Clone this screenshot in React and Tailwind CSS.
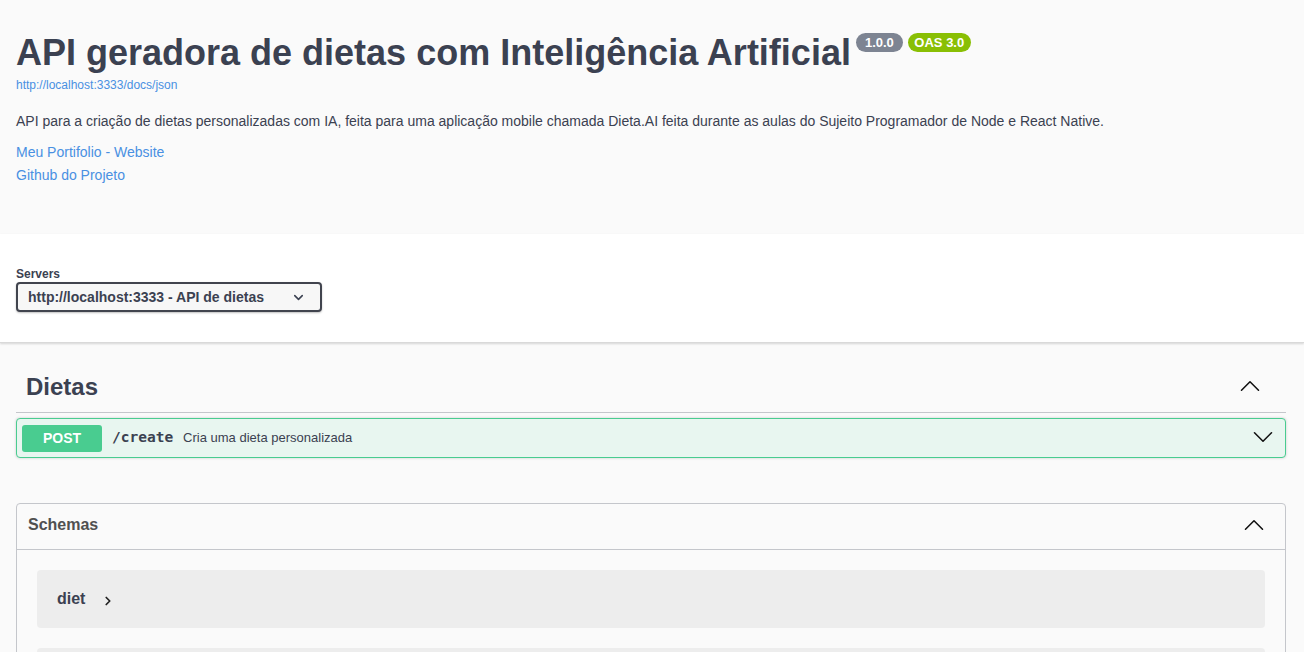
import { ChevronDown, ChevronUp, ChevronRight } from 'lucide-react';

const sans = { fontFamily: '"Liberation Sans", Arial, sans-serif' };

export default function App() {
  return (
    <div className="min-h-screen bg-[#fafafa] text-[#3b4151]" style={sans}>
      {/* Info */}
      <div className="bg-[#fafafa] px-4 pt-[30px] h-[234px]">
        <div className="flex items-start">
          <h2 className="text-[36px] leading-[46px] font-bold text-[#3b4151]">
            API geradora de dietas com Inteligência Artificial
          </h2>
          <span className="ml-[5px] mt-[3px] h-[19px] px-[9px] rounded-full bg-[#7d8492] text-white text-[13px] leading-[19px] font-bold">
            1.0.0
          </span>
          <span className="ml-[5px] mt-[3px] h-[19px] px-[6.5px] rounded-full bg-[#89bf04] text-white text-[13px] leading-[19px] font-bold">
            OAS 3.0
          </span>
        </div>
        <a className="block text-[12px] leading-[14px] text-[#4990e2] mt-[2px]">http://localhost:3333/docs/json</a>
        <p className="text-[14px] leading-[20px] mt-[19px]">
          API para a criação de dietas personalizadas com IA, feita para uma aplicação mobile chamada Dieta.AI feita durante as aulas do Sujeito Programador de Node e React Native.
        </p>
        <a className="block text-[14px] leading-[23px] text-[#4990e2] mt-[10px]">Meu Portifolio - Website</a>
        <a className="block text-[14px] leading-[23px] text-[#4990e2]">Github do Projeto</a>
      </div>

      {/* Servers */}
      <div className="bg-white h-[109px] px-4 pt-[33px] border-b border-[#d9d9d9] shadow-[0_1px_2px_0_rgba(0,0,0,0.15)]">
        <div className="text-[12px] leading-[14px] font-bold">Servers</div>
        <div className="mt-[1px] w-[306px] h-[30px] border-2 border-[#41444e] rounded-[4px] shadow-[0_1px_2px_0_rgba(0,0,0,0.25)] bg-[#f7f7f7] flex items-center justify-between pl-[10px] pr-[14px]">
          <span className="text-[14px] font-bold text-[#3b4151]">http://localhost:3333 - API de dietas</span>
          <ChevronDown size={15} strokeWidth={2.5} className="text-[#3b4151]" />
        </div>
      </div>

      {/* Tag section */}
      <div className="pl-4 pr-[18px] pt-[25px]">
        <div className="flex items-center justify-between border-b border-[#c4c6cb] h-[45px] pl-[10px] pr-[19px]">
          <h3 className="text-[24px] font-bold leading-[30px] -mt-[7px]">Dietas</h3>
          <ChevronUp size={34} strokeWidth={1.1} className="text-[#111] -mt-[9px]" />
        </div>
        <div className="mt-[5px] h-[40px] rounded-[4px] border border-[#49cc90] bg-[#e8f6f0] flex items-center pl-[5px] pr-[5px] shadow-[0_0_3px_rgba(0,0,0,0.19)]">
          <span className="w-[80px] h-[27px] rounded-[3px] bg-[#49cc90] text-white text-[14px] font-bold flex items-center justify-center">
            POST
          </span>
          <span className="ml-[10px] text-[14.5px] font-bold text-[#3b4151]" style={{ fontFamily: '"DejaVu Sans Mono", "Liberation Mono", monospace' }}>
            /create
          </span>
          <span className="ml-[10px] text-[13px] text-[#3b4151]">Cria uma dieta personalizada</span>
          <ChevronDown size={34} strokeWidth={1.1} className="ml-auto text-[#111] -mt-[2px]" />
        </div>

        {/* Schemas */}
        <div className="mt-[45px] border border-[#c4c6cb] rounded-[4px] bg-[#fafafa]">
          <div className="h-[46px] flex items-center justify-between pl-[11px] pr-[14px] border-b border-[#c4c6cb]">
            <span className="text-[16px] font-bold text-[#505050] -mt-[3px]">Schemas</span>
            <ChevronUp size={34} strokeWidth={1.1} className="text-[#111] -mt-[3px]" />
          </div>
          <div className="px-5 pt-5 flex flex-col gap-[20px]">
            <div className="h-[58px] rounded-[4px] bg-[#ededed] flex items-center pl-5">
              <span className="text-[16px] font-bold text-[#3b4151]">diet</span>
              <ChevronRight size={14} strokeWidth={3} className="ml-[16px] mt-[3px] text-[#222]" />
            </div>
            <div className="h-[58px] rounded-[4px] bg-[#ededed]" />
          </div>
        </div>
      </div>
    </div>
  );
}
